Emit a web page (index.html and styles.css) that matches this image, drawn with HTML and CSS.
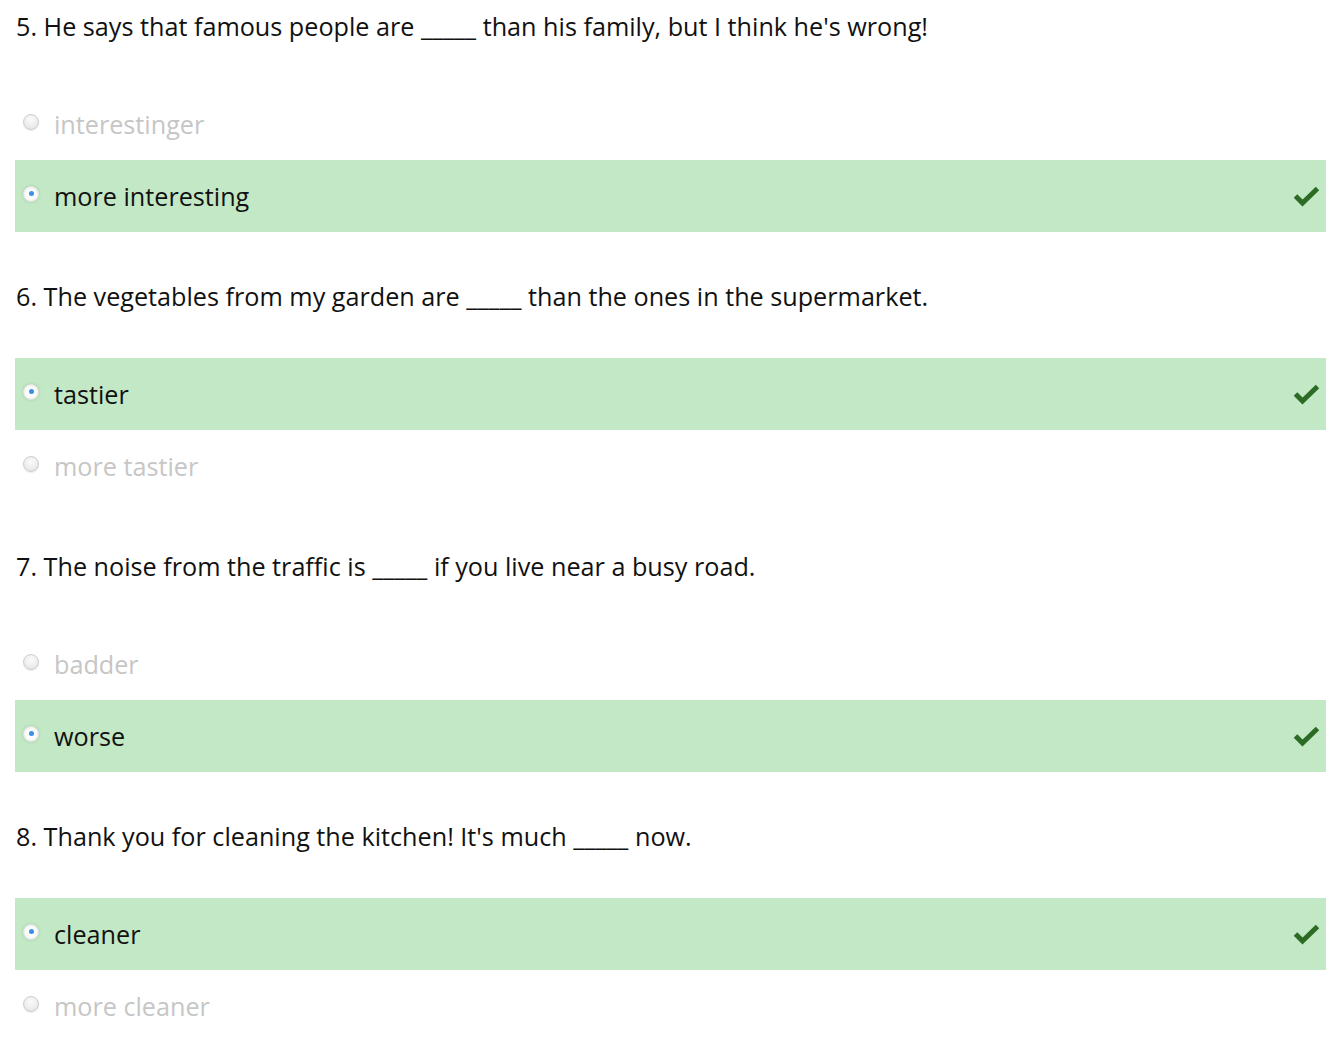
FILE: index.html
```html
<!DOCTYPE html>
<html lang="en">
<head>
<meta charset="utf-8">
<title>Quiz review</title>
<link rel="stylesheet" href="styles.css">
</head>
<body>
<div class="quiz">
  <section class="question">
    <p class="qtext">5. He says that famous people are _____ than his family, but I think he's wrong!</p>
    <div class="answers">
      <div class="option"><span class="radio"></span><span class="label">interestinger</span></div>
      <div class="option correct"><span class="radio checked"></span><span class="label">more interesting</span>
        <svg class="tick" viewBox="0 0 27 22" width="27" height="22"><polyline points="2.5,11 9.5,18 24.5,3.5" fill="none" stroke="#2c6b23" stroke-width="5"/></svg></div>
    </div>
  </section>
  <section class="question">
    <p class="qtext">6. The vegetables from my garden are _____ than the ones in the supermarket.</p>
    <div class="answers">
      <div class="option correct"><span class="radio checked"></span><span class="label">tastier</span>
        <svg class="tick" viewBox="0 0 27 22" width="27" height="22"><polyline points="2.5,11 9.5,18 24.5,3.5" fill="none" stroke="#2c6b23" stroke-width="5"/></svg></div>
      <div class="option"><span class="radio"></span><span class="label">more tastier</span></div>
    </div>
  </section>
  <section class="question">
    <p class="qtext">7. The noise from the traffic is _____ if you live near a busy road.</p>
    <div class="answers">
      <div class="option"><span class="radio"></span><span class="label">badder</span></div>
      <div class="option correct"><span class="radio checked"></span><span class="label">worse</span>
        <svg class="tick" viewBox="0 0 27 22" width="27" height="22"><polyline points="2.5,11 9.5,18 24.5,3.5" fill="none" stroke="#2c6b23" stroke-width="5"/></svg></div>
    </div>
  </section>
  <section class="question">
    <p class="qtext">8. Thank you for cleaning the kitchen! It's much _____ now.</p>
    <div class="answers">
      <div class="option correct"><span class="radio checked"></span><span class="label">cleaner</span>
        <svg class="tick" viewBox="0 0 27 22" width="27" height="22"><polyline points="2.5,11 9.5,18 24.5,3.5" fill="none" stroke="#2c6b23" stroke-width="5"/></svg></div>
      <div class="option"><span class="radio"></span><span class="label">more cleaner</span></div>
    </div>
  </section>
</div>
</body>
</html>
```
FILE: styles.css
```css
html, body {
  margin: 0;
  padding: 0;
  background: #fff;
}
body {
  font-family: "Open Sans", "Liberation Sans", sans-serif;
  font-size: 25.2px;
  color: #111;
}
.quiz {
  padding: 10px 16px 0 15px;
}
.question + .question {
  margin-top: 48px;
}
.qtext {
  margin: 0;
  padding-left: 1px;
  line-height: 32px;
  color: #111;
}
.answers {
  margin-top: 46px;
  display: flex;
  flex-direction: column;
}
.option {
  height: 72px;
  display: flex;
  align-items: center;
  padding: 0 6px 0 8px;
  color: #c6c6c6;
}
.option.correct {
  background: #c3e8c5;
  color: #111;
}
.radio {
  width: 16px;
  height: 16px;
  box-sizing: border-box;
  border-radius: 50%;
  border: 1px solid #cdcdcd;
  background: radial-gradient(circle at 50% 35%, #fbfbfb 0%, #efefef 50%, #dedede 100%);
  box-shadow: 0 1px 1px rgba(0, 0, 0, 0.08);
  margin-right: 15px;
  margin-top: -5px;
  flex: none;
  display: flex;
  align-items: center;
  justify-content: center;
}
.radio.checked {
  border-color: #dfe5df;
  background: radial-gradient(circle at 50% 50%, #ffffff 0%, #fbfbfb 50%, #e3e8e3 100%);
  box-shadow: 0 0 3px rgba(0, 0, 0, 0.15);
}
.radio.checked::after {
  content: "";
  width: 5px;
  height: 5px;
  border-radius: 50%;
  background: #3a8fe6;
}
.label {
  flex: 1;
  line-height: 32px;
}
.tick {
  flex: none;
  display: block;
}
```
